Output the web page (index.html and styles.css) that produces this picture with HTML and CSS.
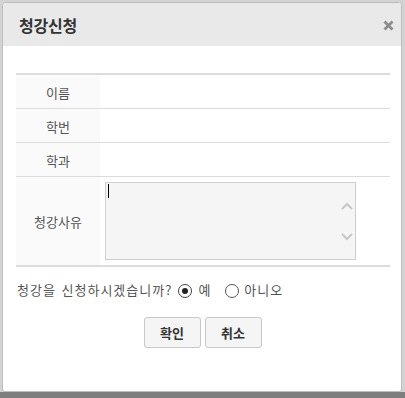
FILE: index.html
```html
<!DOCTYPE html>
<html lang="ko">
<head>
<meta charset="utf-8">
<title>청강신청</title>
<link rel="stylesheet" href="styles.css">
</head>
<body>
<div class="page">
  <div class="modal">
    <div class="modal-header">
      <h1 class="modal-title">청강신청</h1>
      <button class="close" type="button" aria-label="닫기">
        <svg width="11" height="11" viewBox="0 0 11 11"><path d="M1.5 1.5 L9.5 9.5 M9.5 1.5 L1.5 9.5" stroke="#8c8c8c" stroke-width="2.8" stroke-linecap="butt"/></svg>
      </button>
    </div>
    <div class="modal-body">
      <div class="form">
        <div class="row"><div class="label">이름</div><div class="value"></div></div>
        <div class="row"><div class="label">학번</div><div class="value"></div></div>
        <div class="row"><div class="label">학과</div><div class="value"></div></div>
        <div class="row tall">
          <div class="label">청강사유</div>
          <div class="value">
            <div class="ta-wrap">
              <textarea class="reason"></textarea>
              <span class="caret"></span>
              <svg class="arrow up" width="12" height="8" viewBox="0 0 12 8"><path d="M1 7 L6 2 L11 7" fill="none" stroke="#c8c8c8" stroke-width="2"/></svg>
              <svg class="arrow down" width="12" height="8" viewBox="0 0 12 8"><path d="M1 1 L6 6 L11 1" fill="none" stroke="#c8c8c8" stroke-width="2"/></svg>
            </div>
          </div>
        </div>
      </div>
      <div class="question">
        <span class="q-text">청강을 신청하시겠습니까?</span>
        <label class="opt yes"><input type="radio" name="ok" checked><span>예</span></label>
        <label class="opt no"><input type="radio" name="ok"><span>아니오</span></label>
      </div>
      <div class="actions">
        <button class="btn" type="button">확인</button>
        <button class="btn" type="button">취소</button>
      </div>
    </div>
  </div>
  <div class="shade"></div>
</div>
</body>
</html>
```
FILE: styles.css
```css
* { box-sizing: border-box; }
html, body { margin: 0; padding: 0; }
body {
  background: #d3d3d3;
  font-family: "Noto Sans CJK KR", "Noto Sans", sans-serif;
  font-size: 13px;
  color: #555;
  width: 405px;
  height: 398px;
  overflow: hidden;
}
.page { padding: 2px 3px 0 2px; }
.modal {
  height: 390px;
  background: #fff;
  border: 1px solid #bdbdbd;
  border-radius: 4px 4px 3px 3px;
  overflow: hidden;
  display: flex;
  flex-direction: column;
}
.modal-header {
  height: 43px;
  background: #e9e9e9;
  display: flex;
  align-items: center;
  justify-content: space-between;
  padding: 0 7px 0 16px;
}
.modal-title {
  margin: 0;
  font-size: 16px;
  font-weight: bold;
  color: #333;
  line-height: 20px;
  letter-spacing: -0.2px;
}
.close {
  border: 0;
  background: none;
  padding: 0;
  width: 12px;
  height: 12px;
  display: flex;
  align-items: center;
  justify-content: center;
  margin-top: 2px;
}
.modal-body {
  padding: 27px 11px 0 13px;
}
.form {
  border-top: 2px solid #dcdcdc;
  border-bottom: 2px solid #dcdcdc;
}
.row {
  display: grid;
  grid-template-columns: 84px 1fr;
  height: 33px;
}
.row + .row { border-top: 1px solid #dcdcdc; height: 34px; }
.row.tall { height: 89px; }
.label {
  background: #fafafa;
  display: flex;
  align-items: center;
  justify-content: center;
  color: #555;
  padding-top: 1px;
}
.value { padding: 5px 0 0 5px; }
.ta-wrap {
  position: relative;
  width: 251px;
  height: 78px;
}
.reason {
  display: block;
  width: 100%;
  height: 100%;
  margin: 0;
  resize: none;
  background: #f5f5f5;
  border: 1px solid #cfcfcf;
  font-family: inherit;
  outline: none;
}
.caret {
  position: absolute;
  left: 3px;
  top: 2px;
  width: 1px;
  height: 14px;
  background: #000;
}
.arrow { position: absolute; right: 3px; }
.arrow.up { top: 20px; }
.arrow.down { top: 51px; }
.question {
  display: flex;
  align-items: center;
  margin-top: 12px;
  height: 22px;
  line-height: 22px;
  padding-left: 1px;
  color: #555;
  letter-spacing: 1px;
}
.q-text { word-spacing: 1px; }
.opt { display: flex; align-items: center; }
.opt input {
  appearance: none;
  -webkit-appearance: none;
  width: 14px;
  height: 14px;
  margin: 1px 6px 0 6px;
  border: 1px solid #444;
  border-radius: 50%;
  background: #fff;
  position: relative;
}
.opt.no input { margin-left: 14px; margin-right: 5px; border-color: #555; }
.opt input:checked::after {
  content: "";
  position: absolute;
  left: 3px;
  top: 3px;
  width: 6px;
  height: 6px;
  border-radius: 50%;
  background: #222;
}
.actions {
  display: flex;
  justify-content: center;
  gap: 4px;
  margin-top: 16px;
  margin-left: -12px;
  margin-right: -11px;
}
.btn {
  width: 57px;
  height: 31px;
  background: #f5f5f5;
  border: 1px solid #c8c8c8;
  border-radius: 3px;
  font-family: inherit;
  font-size: 13px;
  font-weight: bold;
  color: #333;
  padding: 0;
}
.shade {
  height: 6px;
  margin: 0 -3px 0 -2px;
  background: #7e7e7e;
}
```
